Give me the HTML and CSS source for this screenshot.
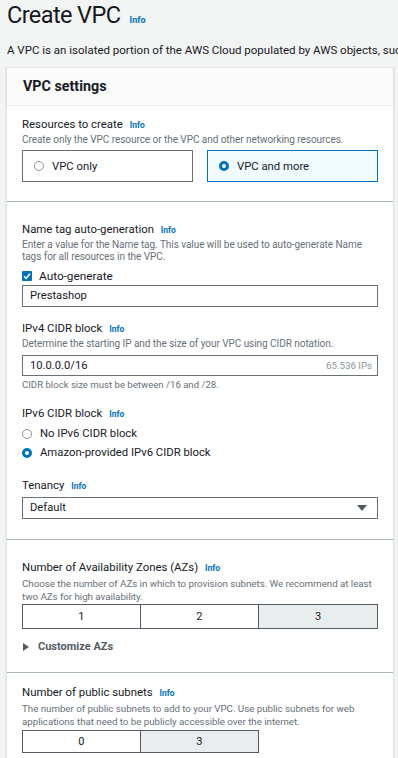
FILE: index.html
```
<!DOCTYPE html>
<html>
<head>
<meta charset="utf-8">
<title>Create VPC</title>
<link rel="stylesheet" href="styles.css">
</head>
<body>

<div class="page">
  <h1 class="page__title">Create VPC <a class="info" href="#info">Info</a></h1>
  <p class="page__desc">A VPC is an isolated portion of the AWS Cloud populated by AWS objects, such as Amazon EC2 instances.</p>

  <div class="panel">
    <div class="panel__head">VPC settings</div>

    <section class="panel__section sec-resources">
      <p class="field__label">Resources to create <a class="info" href="#info">Info</a></p>
      <p class="field__desc">Create only the VPC resource or the VPC and other networking resources.</p>
      <div class="tiles">
        <label class="tile"><span class="radio"></span>VPC only</label>
        <label class="tile tile--on"><span class="radio radio--on"></span>VPC and more</label>
      </div>
    </section>

    <section class="panel__section sec-main">
      <p class="field__label">Name tag auto-generation <a class="info" href="#info">Info</a></p>
      <p class="field__desc">Enter a value for the Name tag. This value will be used to auto-generate Name tags for all resources in the VPC.</p>
      <label class="check-row"><span class="check"><svg viewBox="0 0 10 10" width="10" height="10"><path d="M2 5.2 4.1 7.3 8 2.8" fill="none" stroke="#fff" stroke-width="1.6"/></svg></span>Auto-generate</label>
      <div class="input">Prestashop</div>

      <p class="field__label f-ipv4">IPv4 CIDR block <a class="info" href="#info">Info</a></p>
      <p class="field__desc">Determine the starting IP and the size of your VPC using CIDR notation.</p>
      <div class="input input--cidr"><span>10.0.0.0/16</span><span class="input__hint">65.536 IPs</span></div>
      <p class="field__constraint">CIDR block size must be between /16 and /28.</p>

      <p class="field__label f-ipv6">IPv6 CIDR block <a class="info" href="#info">Info</a></p>
      <label class="radio-row"><span class="radio"></span>No IPv6 CIDR block</label>
      <label class="radio-row radio-row--2"><span class="radio radio--on"></span>Amazon-provided IPv6 CIDR block</label>

      <p class="field__label f-tenancy">Tenancy <a class="info" href="#info">Info</a></p>
      <div class="input select">Default<span class="select__caret"></span></div>
    </section>

    <section class="panel__section sec-azs">
      <p class="field__label">Number of Availability Zones (AZs) <a class="info" href="#info">Info</a></p>
      <p class="field__desc field__desc--wide">Choose the number of AZs in which to provision subnets. We recommend at least two AZs for high availability.</p>
      <div class="segments">
        <span class="segment">1</span>
        <span class="segment">2</span>
        <span class="segment segment--on">3</span>
      </div>
      <p class="expander"><span class="expander__caret"></span>Customize AZs</p>
    </section>

    <section class="panel__section sec-public">
      <p class="field__label">Number of public subnets <a class="info" href="#info">Info</a></p>
      <p class="field__desc field__desc--wide">The number of public subnets to add to your VPC. Use public subnets for web applications that need to be publicly accessible over the internet.</p>
      <div class="segments">
        <span class="segment">0</span>
        <span class="segment segment--on">3</span>
      </div>
    </section>
  </div>
</div>

</body>
</html>
```

FILE: styles.css
```
/* reset */
html,body,p,h1,section{margin:0;padding:0}
html,body{background:#f2f3f3;font-family:Roboto,sans-serif;color:#16191f;overflow:hidden}

:root{
  --text:#16191f;
  --muted:#687078;
  --link:#0073bb;
  --line:#eaeded;
  --field:#687078;
}

/* page */
.page{width:398px;height:758px;overflow:hidden}
.page__title{font-size:23.5px;font-weight:400;line-height:30px;padding-left:7px;margin:0;letter-spacing:-.6px}
.page__desc{font-size:11.5px;line-height:16px;padding-left:7px;margin-top:12px;white-space:nowrap}

.info{font-size:8.5px;font-weight:700;line-height:1;color:var(--link);text-decoration:none;margin-left:4px;letter-spacing:0}
.page__title .info{font-size:9px;margin-left:4px}

/* panel */
.panel{margin:9px 0 0 6px;width:388px;box-sizing:border-box;background:#fff;border:1px solid #dfe2e2;box-shadow:0 1px 1px rgba(0,28,36,.2)}
.panel__head{background:#fafafa;border-bottom:1px solid var(--line);padding:0 16px;font-size:14.3px;font-weight:700;line-height:37px}
.panel__section{padding:0 15px;border-top:1px solid var(--line)}
.panel__head + .panel__section{border-top:0}

.sec-resources{padding-top:10px;padding-bottom:19px}
.sec-main{padding-top:19px;padding-bottom:20px;border-top-color:#aab7b8}
.sec-azs{padding-top:19px;padding-bottom:17px;border-top-color:#aab7b8}
.sec-public{padding-top:11px;padding-bottom:20px;border-top-color:#aab7b8}

.field__label{font-size:11.4px;line-height:16px}
.field__desc{font-size:10px;line-height:12px;color:var(--muted);margin-top:2px;letter-spacing:-.05px}
.field__desc--wide{font-size:9.8px;line-height:13px}
.field__constraint{font-size:9.6px;line-height:12px;color:var(--muted);margin-top:3px}

.f-ipv4{margin-top:13px}
.f-ipv6{margin-top:14px}
.f-tenancy{margin-top:16px}

/* resource tiles */
.tiles{display:grid;grid-template-columns:1fr 1fr;gap:14px;margin-top:4px}
.tile{display:flex;align-items:center;gap:8px;height:32px;box-sizing:border-box;padding:0 11px;border:1px solid var(--field);font-size:11.3px}
.tile--on{border-color:var(--link);background:#f1faff}

.radio{width:10px;height:10px;box-sizing:border-box;border:1px solid #879596;border-radius:50%;flex:none;background:#fff}
.radio--on{border:3.5px solid var(--link)}

.radio-row{display:flex;align-items:center;gap:8px;font-size:11.3px;line-height:16px;margin-top:5px}
.radio-row--2{margin-top:3px}

/* checkbox */
.check-row{display:flex;align-items:center;gap:7px;font-size:11.8px;line-height:16px;margin-top:5px}
.check{width:10px;height:10px;border-radius:1px;background:var(--link);display:flex;flex:none}

/* inputs */
.input{height:22px;box-sizing:border-box;border:1px solid var(--field);padding:0 7px;font-size:11.2px;line-height:20px;display:flex;align-items:center;margin-top:1px}
.input--cidr{height:21px;margin-top:5px;justify-content:space-between}
.input__hint{font-size:9.7px;color:#879596;margin-right:-2px}
.select{margin-top:4px;justify-content:space-between}
.select__caret{width:0;height:0;border-left:5px solid transparent;border-right:5px solid transparent;border-top:6px solid #545b64;margin-right:3px}

/* segmented */
.segments{display:grid;grid-template-columns:repeat(3,118.6px);margin-top:1px}
.segment{height:25px;box-sizing:border-box;border:1px solid #545b64;border-left-width:0;display:flex;align-items:center;justify-content:center;font-size:11px}
.segment:first-child{border-left-width:1px}
.segment--on{background:#eaeded}
.sec-public .segments{margin-top:2px}
.sec-public .segment{height:23px}

/* expander */
.expander{display:flex;align-items:center;gap:9px;font-size:11px;font-weight:700;line-height:16px;margin-top:10px;color:#545b64}
.expander__caret{width:0;height:0;border-top:4px solid transparent;border-bottom:4px solid transparent;border-left:6px solid #545b64;margin-left:1px}
```
